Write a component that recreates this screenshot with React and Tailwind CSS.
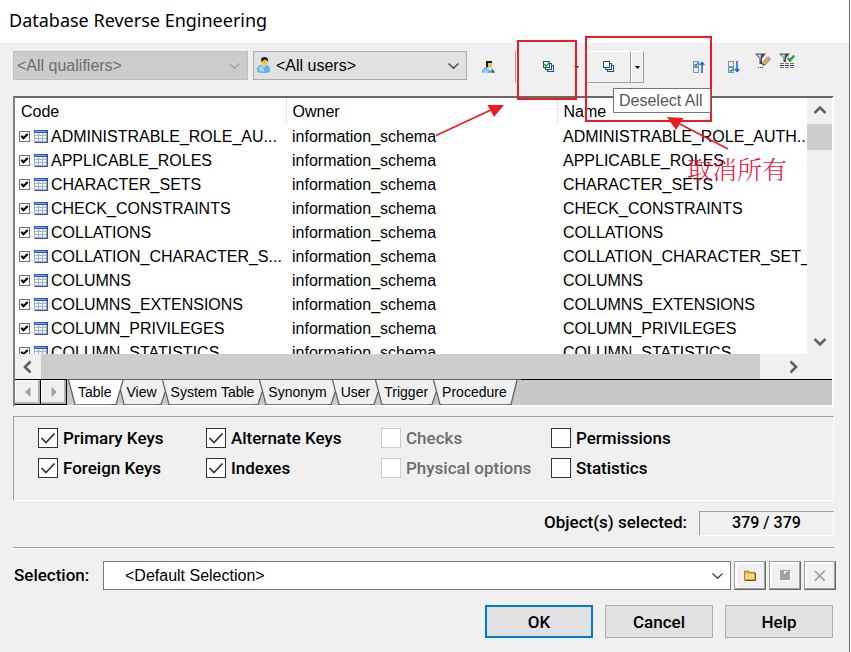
const codes = [
  ["ADMINISTRABLE_ROLE_AU...", "ADMINISTRABLE_ROLE_AUTH..."],
  ["APPLICABLE_ROLES", "APPLICABLE_ROLES"],
  ["CHARACTER_SETS", "CHARACTER_SETS"],
  ["CHECK_CONSTRAINTS", "CHECK_CONSTRAINTS"],
  ["COLLATIONS", "COLLATIONS"],
  ["COLLATION_CHARACTER_S...", "COLLATION_CHARACTER_SET_..."],
  ["COLUMNS", "COLUMNS"],
  ["COLUMNS_EXTENSIONS", "COLUMNS_EXTENSIONS"],
  ["COLUMN_PRIVILEGES", "COLUMN_PRIVILEGES"],
  ["COLUMN_STATISTICS", "COLUMN_STATISTICS"],
];

const tabs = ["Table", "View", "System Table", "Synonym", "User", "Trigger", "Procedure"];

const options = [
  { label: "Primary Keys", checked: true },
  { label: "Alternate Keys", checked: true },
  { label: "Checks", disabled: true },
  { label: "Permissions" },
  { label: "Foreign Keys", checked: true },
  { label: "Indexes", checked: true },
  { label: "Physical options", disabled: true },
  { label: "Statistics" },
];

function UserIcon() {
  return (
    <svg width="13" height="16" viewBox="0 0 12 15">
      <path d="M0 14V11.5C0 9 1.5 7.6 4 7.2L8 7C10.5 7.6 12 9 12 11.5V14C9 15.2 3 15.2 0 14Z" fill="#5db4ee" />
      <path d="M1.5 13V11.5C1.5 10 2.5 9 4 8.5L7 11.5L6 14Z" fill="#a5dafb" />
      <path d="M4 7L6.5 9.5L9 7Z" fill="#e8f5ff" />
      <ellipse cx="7" cy="4.8" rx="2.8" ry="3.4" fill="#f6c928" />
      <path d="M3.8 4.4V2.2C4 .6 5.4 0 7 0S10 .8 10.3 2.6V4.4C9.4 3.2 8.4 2.6 7 2.4L5 4Z" fill="#1d1a16" />
    </svg>
  );
}

function FindUserIcon() {
  return (
    <svg width="13" height="13" viewBox="0 0 13 13">
      <path d="M0 12V9.5L3.5 6H8L12 9.5V12Z" fill="#5fb0e8" />
      <path d="M1 11L4 7L6 10V12H1Z" fill="#9fd2f5" />
      <path d="M4 0H10V6H4Z" fill="#1f1b1a" />
      <path d="M6 2H10V6H6Z" fill="#f3c326" />
      <circle cx="8" cy="7.5" r="2.2" fill="#dcebf5" stroke="#a9b7c4" />
      <path d="M9.8 9.3L12.2 11.6" stroke="#6b4a3a" strokeWidth="2" />
    </svg>
  );
}

function StackIcon({ ticked }) {
  return (
    <svg width="12" height="12" viewBox="0 0 12 12">
      <path d="M4 4H11V11H4Z" fill="#1b5488" />
      <path d="M5 5H10V10H5Z" fill="#f0f0f0" />
      <path d="M2 2H9V9H2Z" fill="#1b5488" />
      <path d="M3 3H8V8H3Z" fill="#f0f0f0" />
      <path d="M0 0H7V7H0Z" fill="#1b5488" />
      <path d="M1 1H6V6H1Z" fill="#fff" />
      {ticked && <path d="M1 3L3 5L6.5 1.500" fill="none" stroke="#1fa52b" strokeWidth="1.600" />}
    </svg>
  );
}

function MoveIcon({ up }) {
  return (
    <svg width="12" height="12" viewBox="0 0 12 12" fill="none">
      <g stroke="#7d93a8" fill="#e6f2f5">
        <rect x="0.5" y="0.5" width="5" height="5" />
        <rect x="0.5" y="6.5" width="5" height="5" />
      </g>
      <path d={up ? "M1.5 3L3 4.5L5.5 1.5" : "M1.5 9L3 10.5L5.5 7.5"} stroke="#2b9b3a" strokeWidth="1.3" />
      <path d={up ? "M9 12V2M6.7 4L9 1.5L11.3 4" : "M9 0V10M6.7 8L9 10.5L11.3 8"} stroke="#1164d8" strokeWidth="1.5" />
    </svg>
  );
}

function FilterEditIcon() {
  return (
    <svg width="16" height="16" viewBox="0 0 16 16">
      <path d="M0 .5H11L7 5.5V11H4.5V5.5Z" fill="#4a4a4a" />
      <path d="M2 1.5H6L5.5 6V9L5 5Z" fill="#d5d5d5" />
      <path d="M8.5 12L7.5 9.8L13 3.8L15.5 6.2L10 12Z" fill="#e2b266" stroke="#8a5a2c" strokeWidth=".7" />
      <path d="M13 3.8L15.5 6.2L14.6 7.2L12 4.8Z" fill="#d98c80" />
      <path d="M7.3 12.5L7.5 10L9.6 12Z" fill="#333" />
      <path d="M3 14H4V15H3ZM5 14H6V15H5ZM7 14H8V15H7Z" fill="#222" />
    </svg>
  );
}

function FilterCheckIcon() {
  return (
    <svg width="16" height="16" viewBox="0 0 16 16">
      <path d="M0 .5H11L7 5V9H4.500V5Z" fill="#4a4a4a" />
      <path d="M2 1.5H6L5.5 5V8L5 5Z" fill="#d5d5d5" />
      <path d="M8.8 5L11 7.5L15.3 2.5" fill="none" stroke="#17a525" strokeWidth="2.2" />
      <g strokeDasharray="4 1">
        <path d="M1 10.5H15" stroke="#777" />
        <path d="M1 12.5H15" stroke="#1b2a8c" />
        <path d="M1 14.5H15" stroke="#777" />
      </g>
    </svg>
  );
}

function TableIcon() {
  return (
    <svg width="14" height="13" viewBox="0 0 14 13" className="shrink-0">
      <path d="M0 0H14V13H0Z" fill="#9db1d6" />
      <path d="M0 0H14V3H0Z" fill="#2f57c0" />
      <path d="M1 1H12V2H1Z" fill="#7c9cf0" />
      <path d="M13 1H14V13H1V12H13Z" fill="#3f557f" />
      <path d="M1 3H4V5H1ZM5 3H8V5H5ZM9 3H12V5H9ZM1 6H4V8H1ZM5 6H8V8H5ZM9 6H12V8H9ZM1 9H4V11H1ZM5 9H8V11H5ZM9 9H12V11H9Z" fill="#f4f8ff" />
    </svg>
  );
}

function Caret() {
  return (
    <svg width="5" height="3" viewBox="0 0 5 3">
      <path d="M0 0H5L2.5 3Z" fill="#000" />
    </svg>
  );
}

function Chevron({ dir }) {
  const paths = {
    up: "M1.5 9L7 3.5L12.5 9",
    down: "M1.5 5L7 10.5L12.5 5",
    left: "M9.5 1.5L4 7L9.5 12.5",
    right: "M4.5 1.5L10 7L4.5 12.5",
  };
  return (
    <svg width="14" height="14" viewBox="0 0 14 14">
      <path d={paths[dir]} fill="none" stroke="#606060" strokeWidth="2.6" />
    </svg>
  );
}

function ScrollButton({ dir, label }) {
  return (
    <button aria-label={label} className="flex size-[26px] shrink-0 items-center justify-center">
      <Chevron dir={dir} />
    </button>
  );
}

function SelectArrow({ className }) {
  return (
    <svg width="11" height="6" viewBox="0 0 11 6" className={`pointer-events-none absolute top-1/2 right-2 -translate-y-1/2 ${className}`}>
      <path d="M.5 .5L5.5 5.3L10.5 .5" fill="none" stroke="currentColor" strokeWidth="1.3" />
    </svg>
  );
}

function ToolButton({ label, className, children }) {
  return (
    <button aria-label={label} className={`flex shrink-0 items-center justify-center ${className}`}>
      {children}
    </button>
  );
}

const raised = "border border-t-white border-l-white border-r-[#a0a0a0] border-b-[#a0a0a0]";

function Toolbar() {
  return (
    <div className="flex h-[53px] items-start pt-2">
      <div className="relative w-[235px] shrink-0">
        <select aria-label="Qualifiers" disabled className="block h-[29px] w-full appearance-none border border-[#bfbfbf] bg-[#cccccc] px-[3px] text-[#6d6d6d] opacity-100">
          <option>&lt;All qualifiers&gt;</option>
        </select>
        <SelectArrow className="text-[#a0a0a0]" />
      </div>
      <div className="relative ml-[5px] w-[214px] shrink-0">
        <select aria-label="Users" className="block h-[29px] w-full appearance-none border border-[#adadad] bg-[#e1e1e1] pr-6 pl-[22px]">
          <option>&lt;All users&gt;</option>
        </select>
        <div className="pointer-events-none absolute top-[6px] left-1">
          <UserIcon />
        </div>
        <SelectArrow className="text-[#444]" />
      </div>
      <ToolButton label="Find user" className="ml-[6px] h-8 w-[30px]"><FindUserIcon /></ToolButton>
      <div className="ml-3 h-8 w-px shrink-0 bg-[#a0a0a0]" />
      <ToolButton label="Select All" className="ml-3 h-8 w-[42px]"><StackIcon ticked /></ToolButton>
      <ToolButton label="Select All options" className="h-8 w-[13px]"><Caret /></ToolButton>
      <ToolButton label="Deselect All" className={`ml-1 h-8 w-[44px] ${raised}`}><StackIcon /></ToolButton>
      <ToolButton label="Deselect All options" className={`h-8 w-[13px] ${raised}`}><Caret /></ToolButton>
      <ToolButton label="Move selected up" className="ml-10 h-8 w-[30px]"><MoveIcon up /></ToolButton>
      <ToolButton label="Move selected down" className="ml-[5px] h-8 w-[30px]"><MoveIcon /></ToolButton>
      <ToolButton label="Edit filter" className="ml-1 h-5 w-5"><FilterEditIcon /></ToolButton>
      <ToolButton label="Apply filter" className="ml-1 h-5 w-5"><FilterCheckIcon /></ToolButton>
    </div>
  );
}

function ObjectTable() {
  return (
    <div className="h-64 min-w-0 flex-1 overflow-hidden bg-white">
      <table className="w-full table-fixed border-collapse text-left leading-[22px] whitespace-nowrap">
        <colgroup>
          <col className="w-[271px]" />
          <col className="w-[271px]" />
          <col />
        </colgroup>
        <thead>
          <tr className="h-[26px]">
            <th className="border-r border-[#e5e5e5] p-0 pt-[2px] pl-[6px] font-normal">Code</th>
            <th className="border-r border-[#e5e5e5] p-0 pt-[2px] pl-[6px] font-normal">Owner</th>
            <th className="p-0 pt-[2px] pl-[6px] font-normal">Name</th>
          </tr>
        </thead>
        <tbody>
          {codes.map(([code, name]) => (
            <tr key={code} className="h-6">
              <td className="p-0">
                <label className="flex items-center pl-1">
                  <span className="relative size-[11px] shrink-0">
                    <input type="checkbox" defaultChecked className="peer block size-[11px] appearance-none border border-[#707070] bg-white" />
                    <svg width="11" height="11" viewBox="0 0 11 11" className="pointer-events-none absolute inset-0 hidden peer-checked:block">
                      <path d="M2.3 4.8L4.5 7.2L8.7 3" fill="none" stroke="#000" strokeWidth="2" />
                    </svg>
                  </span>
                  <span className="mr-[3px] ml-1"><TableIcon /></span>
                  <span className="pt-[2px]">{code}</span>
                </label>
              </td>
              <td className="p-0 pt-[2px] pl-[6px]">information_schema</td>
              <td className="overflow-hidden p-0 pt-[2px] pl-[6px]">{name}</td>
            </tr>
          ))}
        </tbody>
      </table>
    </div>
  );
}

function TabEdge({ kind }) {
  if (kind === "start")
    return (
      <svg width="11" height="25" viewBox="0 0 11 25" className="shrink-0">
        <path d="M1 0H11V25H8Z" fill="#fff" />
        <path d="M1.5 0L8 24.5" stroke="#606060" strokeWidth="1.3" />
        <path d="M8 24.5H11" stroke="#808080" />
      </svg>
    );
  if (kind === "end")
    return (
      <svg width="14" height="25" viewBox="0 0 14 25" className="shrink-0">
        <path d="M0 0H10L4 25H0Z" fill="#f0f0f0" />
        <path d="M10 0L4 24.5H0" fill="none" stroke="#606060" strokeWidth="1.2" />
      </svg>
    );
  if (kind === "active")
    return (
      <svg width="15" height="25" viewBox="0 0 15 25" className="shrink-0">
        <path d="M0 0H12L5 25H0Z" fill="#fff" />
        <path d="M12 0H15V25H13L9 11Z" fill="#f0f0f0" />
        <path d="M12 0L5 24.5H0M9.5 10L13 24.5H15" fill="none" stroke="#606060" strokeWidth="1.2" />
      </svg>
    );
  return (
    <svg width="14" height="25" viewBox="0 0 14 25" className="shrink-0">
      <path d="M0 0H14V25H12L8.5 11L4 25H0Z" fill="#f0f0f0" />
      <path d="M5.5 0L12 24.5H14M8.5 11L4 24.5H0" fill="none" stroke="#606060" strokeWidth="1.2" />
    </svg>
  );
}

function TabBar() {
  const nav = "flex h-full w-[26px] items-center justify-center border-t border-r border-b border-black bg-[#f0f0f0] shadow-[inset_-2px_-2px_0_#b0b0b0,inset_1px_1px_0_#fff]";
  return (
    <div className="flex h-[26px] bg-[#c8c8c8]">
      <button aria-label="Previous tab" className={nav}>
        <svg width="6" height="10" viewBox="0 0 6 10"><path d="M5.500 0V10L0 5Z" fill="#a0a0a0" /></svg>
      </button>
      <button aria-label="Next tab" className={nav}>
        <svg width="6" height="10" viewBox="0 0 6 10"><path d="M.5 0V10L6 5Z" fill="#a0a0a0" /></svg>
      </button>
      <div className="flex border-t border-[#606060] text-[14px]">
        <TabEdge kind="start" />
        {tabs.map((tab, i) => (
          <div key={tab} className="flex">
            <button className={`border-b border-[#808080] leading-6 whitespace-nowrap ${i === 0 ? "bg-white" : "bg-[#f0f0f0]"}`}>{tab}</button>
            <TabEdge kind={i === 0 ? "active" : i === tabs.length - 1 ? "end" : "middle"} />
          </div>
        ))}
      </div>
      <div className="flex-1 border-t border-black" />
    </div>
  );
}

function Options() {
  return (
    <fieldset className="mt-[9px] grid h-[85px] grid-cols-[168px_175px_170px_1fr] content-start gap-y-[10px] border border-t-[#a0a0a0] border-r-white border-b-white border-l-[#a0a0a0] pt-[11px] pl-6 [font-family:Roboto,sans-serif] text-[17px] leading-5 font-medium">
      {options.map(({ label, checked, disabled }) => (
        <label key={label} className={`flex items-center gap-[5px] whitespace-nowrap ${disabled ? "text-[#6d6d6d]" : ""}`}>
          <span className="relative size-5 shrink-0">
            <input
              type="checkbox"
              defaultChecked={checked}
              disabled={disabled}
              className="peer block size-5 appearance-none border border-[#333] bg-white disabled:border-[#cccccc]"
            />
            <svg width="20" height="20" viewBox="0 0 20 20" className="pointer-events-none absolute inset-0 hidden peer-checked:block">
              <path d="M3.500 10L8 14.500L16.500 5.500" fill="none" stroke="#333" strokeWidth="1.700" />
            </svg>
          </span>
          {label}
        </label>
      ))}
    </fieldset>
  );
}

function SmallButton({ label, children }) {
  return (
    <button
      aria-label={label}
      className="flex w-8 shrink-0 items-center justify-center border border-t-[#a0a0a0] border-r-[#696969] border-b-[#696969] border-l-[#a0a0a0] shadow-[inset_-1px_-1px_0_#a0a0a0,inset_2px_2px_0_#fff]"
    >
      {children}
    </button>
  );
}

function Footer() {
  const action = "h-[33px] w-[108px] bg-[#e1e1e1]";
  return (
    <div className="[font-family:Roboto,sans-serif] text-[17px] font-medium">
      <div className="mt-[10px] flex h-[25px] items-center justify-end gap-3">
        <span className="-mt-1">Object(s) selected:</span>
        <output className="w-[135px] border border-t-[#a0a0a0] border-r-white border-b-white border-l-[#a0a0a0] text-center text-[16px] leading-[21px] pb-[2px]">379 / 379</output>
      </div>
      <div className="mt-[11px] h-[2px] border-t border-b border-t-[#a0a0a0] border-b-white" />
      <div className="mt-3 -mr-[2px] flex h-[29px] gap-[3px]">
        <label htmlFor="selection" className="w-[87px] pl-px leading-[29px]">Selection:</label>
        <div className="relative flex-1">
          <select id="selection" className="block h-full w-full appearance-none border border-[#7a7a7a] bg-white pl-[21px] [font-family:'Liberation_Sans',Arial,sans-serif] text-[16px] font-normal">
            <option>&lt;Default Selection&gt;</option>
          </select>
          <SelectArrow className="text-[#444]" />
        </div>
        <SmallButton label="Open selection">
          <svg width="12" height="11" viewBox="0 0 12 11">
            <path d="M.5 2.5V1H4.5L5.500 2.500H11V10H.5Z" fill="#e8b73c" stroke="#8a6a20" strokeWidth=".8" />
            <path d="M1 4H10.500V9.500H1Z" fill="#fbd974" />
            <path d="M11.300 3V10.400H1" fill="none" stroke="#5a4210" />
          </svg>
        </SmallButton>
        <SmallButton label="Save selection">
          <svg width="11" height="11" viewBox="0 0 11 11">
            <path d="M1 1H11V11H1Z" fill="#fff" />
            <path d="M0 0H10V10H0Z" fill="#a0a0a0" />
            <path d="M4 1H8V2H6V3H5V4H4Z" fill="#f0f0f0" />
          </svg>
        </SmallButton>
        <SmallButton label="Delete selection">
          <svg width="12" height="12" viewBox="0 0 12 12">
            <path d="M1.500 1.500L11.500 11.500M11.500 1.500L1.500 11.500" stroke="#fff" strokeWidth="1.600" />
            <path d="M.8 .8L10.800 10.800M10.800 .8L.8 10.800" stroke="#a0a0a0" strokeWidth="1.800" />
          </svg>
        </SmallButton>
      </div>
      <div className="mt-[15px] flex justify-end gap-3 pr-px">
        <button className={`${action} border-2 border-[#0078d7]`}>OK</button>
        <button className={`${action} border border-[#adadad]`}>Cancel</button>
        <button className={`${action} border border-[#adadad]`}>Help</button>
      </div>
    </div>
  );
}

function Annotations() {
  return (
    <div className="pointer-events-none absolute inset-0">
      <div className="absolute top-10 left-[517px] h-[60px] w-[60px] border-2 border-[#ed1c24]" />
      <div className="absolute top-9 left-[585px] h-[86px] w-[127px] border-2 border-[#ed1c24]" />
      <div role="tooltip" className="absolute top-[88px] left-[613px] h-[25px] w-[98px] border border-[#767676] bg-white pl-[5px] leading-[23px] whitespace-nowrap text-[#575757]">
        Deselect All
      </div>
      <svg className="absolute inset-0" width="849" height="652" viewBox="0 0 849 652">
        <g stroke="#ed1c24" strokeWidth="1.700" fill="#ed1c24">
          <path d="M436 135.500L493 109" />
          <path d="M728 149L678 123" />
          <path d="M504 105L487.500 105L494 117Z" stroke="none" />
          <path d="M667 117L683.500 118L676 130Z" stroke="none" />
        </g>
      </svg>
      <div className="absolute top-[152px] left-[687px] [font-family:'Noto_Serif_CJK_SC','Noto_Sans_CJK_SC',serif] text-[25px] leading-8 font-light whitespace-nowrap text-[#f0143c]">
        取消所有
      </div>
    </div>
  );
}

export default function App() {
  return (
    <div className="bg-white pr-px">
      <div className="relative min-h-screen border-r border-[#696969] bg-[#f0f0f0] [font-family:'Liberation_Sans',Arial,sans-serif] text-[16px] leading-6 text-black">
        <header className="h-[43px] bg-white pt-2 pl-[9px]">
          <h1 className="[font-family:'Noto_Sans',sans-serif] text-[18px]">Database Reverse Engineering</h1>
        </header>
        <main className="pr-[15px] pl-[13px]">
          <Toolbar />
          <section className="border-2 border-t-[#696969] border-r-white border-b-white border-l-[#808080]">
            <div className="flex">
              <ObjectTable />
              <div className="flex w-[25px] shrink-0 flex-col">
                <ScrollButton dir="up" label="Scroll up" />
                <div className="h-[26px] bg-[#cdcdcd]" />
                <div className="flex-1" />
                <ScrollButton dir="down" label="Scroll down" />
              </div>
            </div>
            <div className="flex h-[25px] items-center">
              <ScrollButton dir="left" label="Scroll left" />
              <div className="h-full flex-1 bg-[#cdcdcd]" />
              <div className="w-5" />
              <ScrollButton dir="right" label="Scroll right" />
              <div className="w-[26px]" />
            </div>
            <TabBar />
          </section>
          <Options />
          <Footer />
        </main>
        <Annotations />
      </div>
    </div>
  );
}
